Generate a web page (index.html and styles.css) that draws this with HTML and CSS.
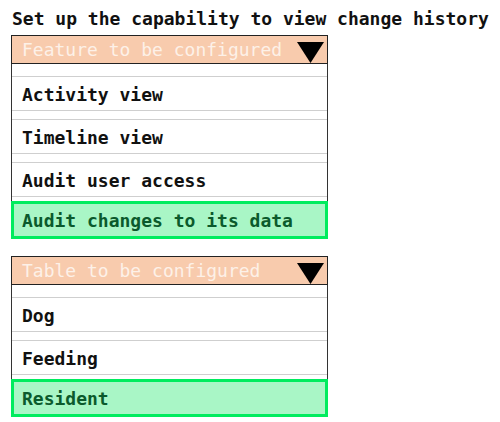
FILE: index.html
```html
<!DOCTYPE html>
<html>
<head>
    <title>Change history</title>
    <link rel="stylesheet" href="styles.css">
</head>
<body>
    <div class="page">
        <h1 class="title">Set up the capability to view change history</h1>

        <div class="dropdown">
            <div class="dropdown-header">
                <span>Feature to be configured</span>
                <svg class="arrow" width="27" height="21" viewBox="0 0 27 21"><polygon points="0,0 27,0 13.5,21" fill="#000"/></svg>
            </div>
            <div class="options">
                <div class="option">Activity view</div>
                <div class="option">Timeline view</div>
                <div class="option">Audit user access</div>
                <div class="option selected">Audit changes to its data</div>
            </div>
        </div>

        <div class="dropdown">
            <div class="dropdown-header">
                <span>Table to be configured</span>
                <svg class="arrow" width="27" height="21" viewBox="0 0 27 21"><polygon points="0,0 27,0 13.5,21" fill="#000"/></svg>
            </div>
            <div class="options">
                <div class="option">Dog</div>
                <div class="option">Feeding</div>
                <div class="option selected">Resident</div>
            </div>
        </div>
    </div>
</body>
</html>
```

FILE: styles.css
```css
body {
    margin: 0;
    background: #fff;
    font-family: "DejaVu Sans Mono", "Liberation Mono", monospace;
    font-size: 18px;
    color: #111;
}
.page {
    padding: 8px 0 0 11px;
}
.title {
    margin: 0 0 5px 1px;
    font-size: 18px;
    line-height: 22px;
    font-weight: bold;
}
.dropdown {
    width: 317px;
    margin-bottom: 17px;
}
.dropdown-header {
    display: flex;
    justify-content: space-between;
    height: 27px;
    padding: 0 3px 0 10px;
    border: 1px solid #222;
    background-color: #f8cbad;
    color: #fdf1e8;
    line-height: 27px;
}
.arrow {
    align-self: flex-end;
}
.options {
    display: flex;
    flex-direction: column;
    gap: 8px;
    padding-top: 12px;
    border-left: 1px solid #333;
    border-right: 1px solid #333;
}
.option {
    padding: 3px 10px 0;
    line-height: 30px;
    border-top: 1px solid #cfcfcf;
    border-bottom: 1px solid #cfcfcf;
    font-weight: bold;
}
.option.selected {
    margin: -4px -1px 0;
    padding: 2px 8px 0;
    border: 3px solid #00ec5e;
    background-color: #a9f6c6;
    color: #0b5a2c;
}
```
